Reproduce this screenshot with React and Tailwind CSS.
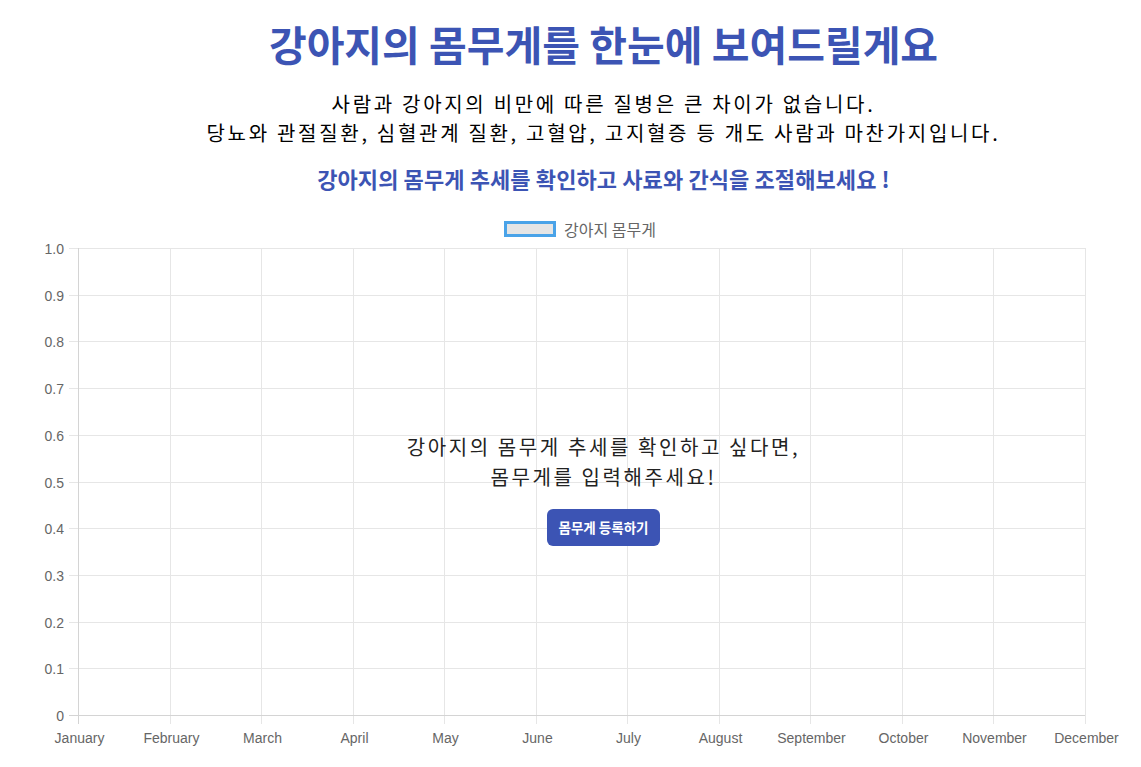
import React from "react";

const months = [
  "January", "February", "March", "April", "May", "June",
  "July", "August", "September", "October", "November", "December",
];
const ticks = ["1.0", "0.9", "0.8", "0.7", "0.6", "0.5", "0.4", "0.3", "0.2", "0.1", "0"];

const KR = { fontFamily: '"Noto Sans CJK KR", "Noto Sans", sans-serif' };

const WeightChart = () => {
  const left = 78;
  const right = 1085;
  const top = 9;
  const bottom = 476;
  const stepX = (right - left) / 11;
  const stepY = (bottom - top) / 10;

  return (
    <svg width="1141" height="527" className="block" style={{ fontFamily: '"Liberation Sans", Arial, sans-serif' }}>
      {/* horizontal grid */}
      {ticks.map((t, i) => {
        const y = Math.round(top + i * stepY) + 0.5;
        return (
          <g key={t}>
            <line x1={69} x2={right} y1={y} y2={y} stroke="#e6e6e6" strokeWidth="1" />
            <text x={64} y={y + 5} textAnchor="end" fontSize="14" fill="#666">{t}</text>
          </g>
        );
      })}
      {/* vertical grid */}
      {months.map((m, i) => {
        const x = Math.round(left + i * stepX) + 0.5;
        return (
          <g key={m}>
            <line x1={x} x2={x} y1={top} y2={bottom + 9} stroke="#e6e6e6" strokeWidth="1" />
            <text x={x + 1} y={504} textAnchor="middle" fontSize="14" fill="#666">{m}</text>
          </g>
        );
      })}
      {/* axes */}
      <line x1={left + 0.5} x2={left + 0.5} y1={top} y2={bottom + 9} stroke="#d4d4d4" strokeWidth="1" />
      <line x1={69} x2={right} y1={bottom + 0.5} y2={bottom + 0.5} stroke="#d4d4d4" strokeWidth="1" />
    </svg>
  );
};

const App = () => {
  return (
    <div className="bg-white min-h-screen w-[1141px] h-[767px] overflow-hidden" style={KR}>
      {/* Header */}
      <div className="pl-[66px] pt-[19px] text-center">
        <h1 className="text-[41px] leading-[48px] font-bold text-[#3c54b4]">
          강아지의 몸무게를 한눈에 보여드릴게요
        </h1>
        <p className="mt-[22px] text-[20px] leading-[29px] tracking-[2.7px] text-black">
          사람과 강아지의 비만에 따른 질병은 큰 차이가 없습니다.
          <br />
          당뇨와 관절질환, 심혈관계 질환, 고혈압, 고지혈증 등 개도 사람과 마찬가지입니다.
        </p>
        <p className="mt-[17px] text-[22px] leading-[28px] tracking-[0.1px] font-bold text-[#3c54b4]">
          강아지의 몸무게 추세를 확인하고 사료와 간식을 조절해보세요 !
        </p>
      </div>

      {/* Legend */}
      <div className="mt-[26px] h-[21px] flex items-center justify-center gap-[8px] pl-[19px]">
        <span className="w-[52px] h-[16px] border-[3px] border-[#4aa3e8] bg-[#e5e5e5]" />
        <span className="text-[16px] text-[#666]">강아지 몸무게</span>
      </div>

      {/* Chart */}
      <div className="relative">
        <WeightChart />
        <div className="absolute left-0 right-0 top-[193px] pl-[66px] flex flex-col items-center">
          <p className="text-[20px] leading-[30px] tracking-[2.6px] text-[#222] text-center">
            강아지의 몸무게 추세를 확인하고 싶다면,
            <br />
            몸무게를 입력해주세요!
          </p>
          <button className="mt-[17px] w-[113px] h-[37px] rounded-[6px] bg-[#3c54b4] text-white text-[13.5px] font-bold">
            몸무게 등록하기
          </button>
        </div>
      </div>
    </div>
  );
};

export default App;
